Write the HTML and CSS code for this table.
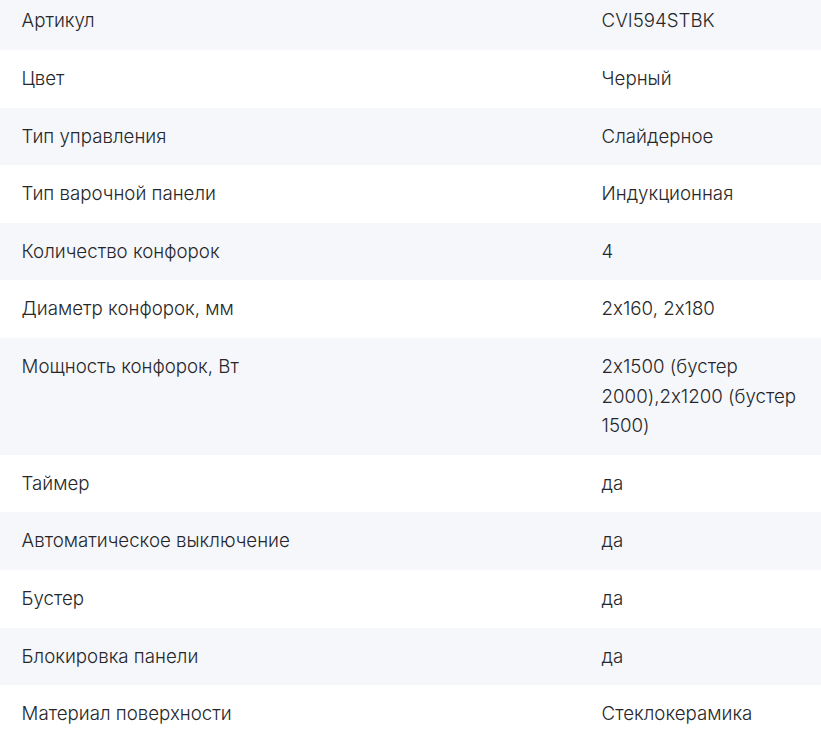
FILE: index.html
```html
<!DOCTYPE html>
<html lang="ru">
<head>
<meta charset="utf-8">
<title>Характеристики</title>
<link rel="stylesheet" href="styles.css">
</head>
<body>
<div class="specs">
  <div class="row"><div class="name">Артикул</div><div class="value">CVI594STBK</div></div>
  <div class="row"><div class="name">Цвет</div><div class="value">Черный</div></div>
  <div class="row"><div class="name">Тип управления</div><div class="value">Слайдерное</div></div>
  <div class="row"><div class="name">Тип варочной панели</div><div class="value">Индукционная</div></div>
  <div class="row"><div class="name">Количество конфорок</div><div class="value">4</div></div>
  <div class="row"><div class="name">Диаметр конфорок, мм</div><div class="value">2x160, 2x180</div></div>
  <div class="row"><div class="name">Мощность конфорок, Вт</div><div class="value">2x1500 (бустер 2000),2x1200 (бустер 1500)</div></div>
  <div class="row"><div class="name">Таймер</div><div class="value">да</div></div>
  <div class="row"><div class="name">Автоматическое выключение</div><div class="value">да</div></div>
  <div class="row"><div class="name">Бустер</div><div class="value">да</div></div>
  <div class="row"><div class="name">Блокировка панели</div><div class="value">да</div></div>
  <div class="row"><div class="name">Материал поверхности</div><div class="value">Стеклокерамика</div></div>
</div>
</body>
</html>
```
FILE: styles.css
```css
html, body {
  margin: 0;
  padding: 0;
  background: #ffffff;
}
body {
  font-family: Inter, "Noto Sans", sans-serif;
  font-feature-settings: "calt" 0;
  color: #26272b;
  overflow: hidden;
}
.specs {
  margin-top: -7.6px;
  display: flex;
  flex-direction: column;
}
.row {
  display: grid;
  grid-template-columns: 580px 1fr;
  padding: 14px 12px 14px 21.6px;
  font-size: 18.7px;
  font-weight: 300;
  line-height: 29.6px;
}
.row:nth-child(odd) {
  background: #f6f7fb;
}
```
